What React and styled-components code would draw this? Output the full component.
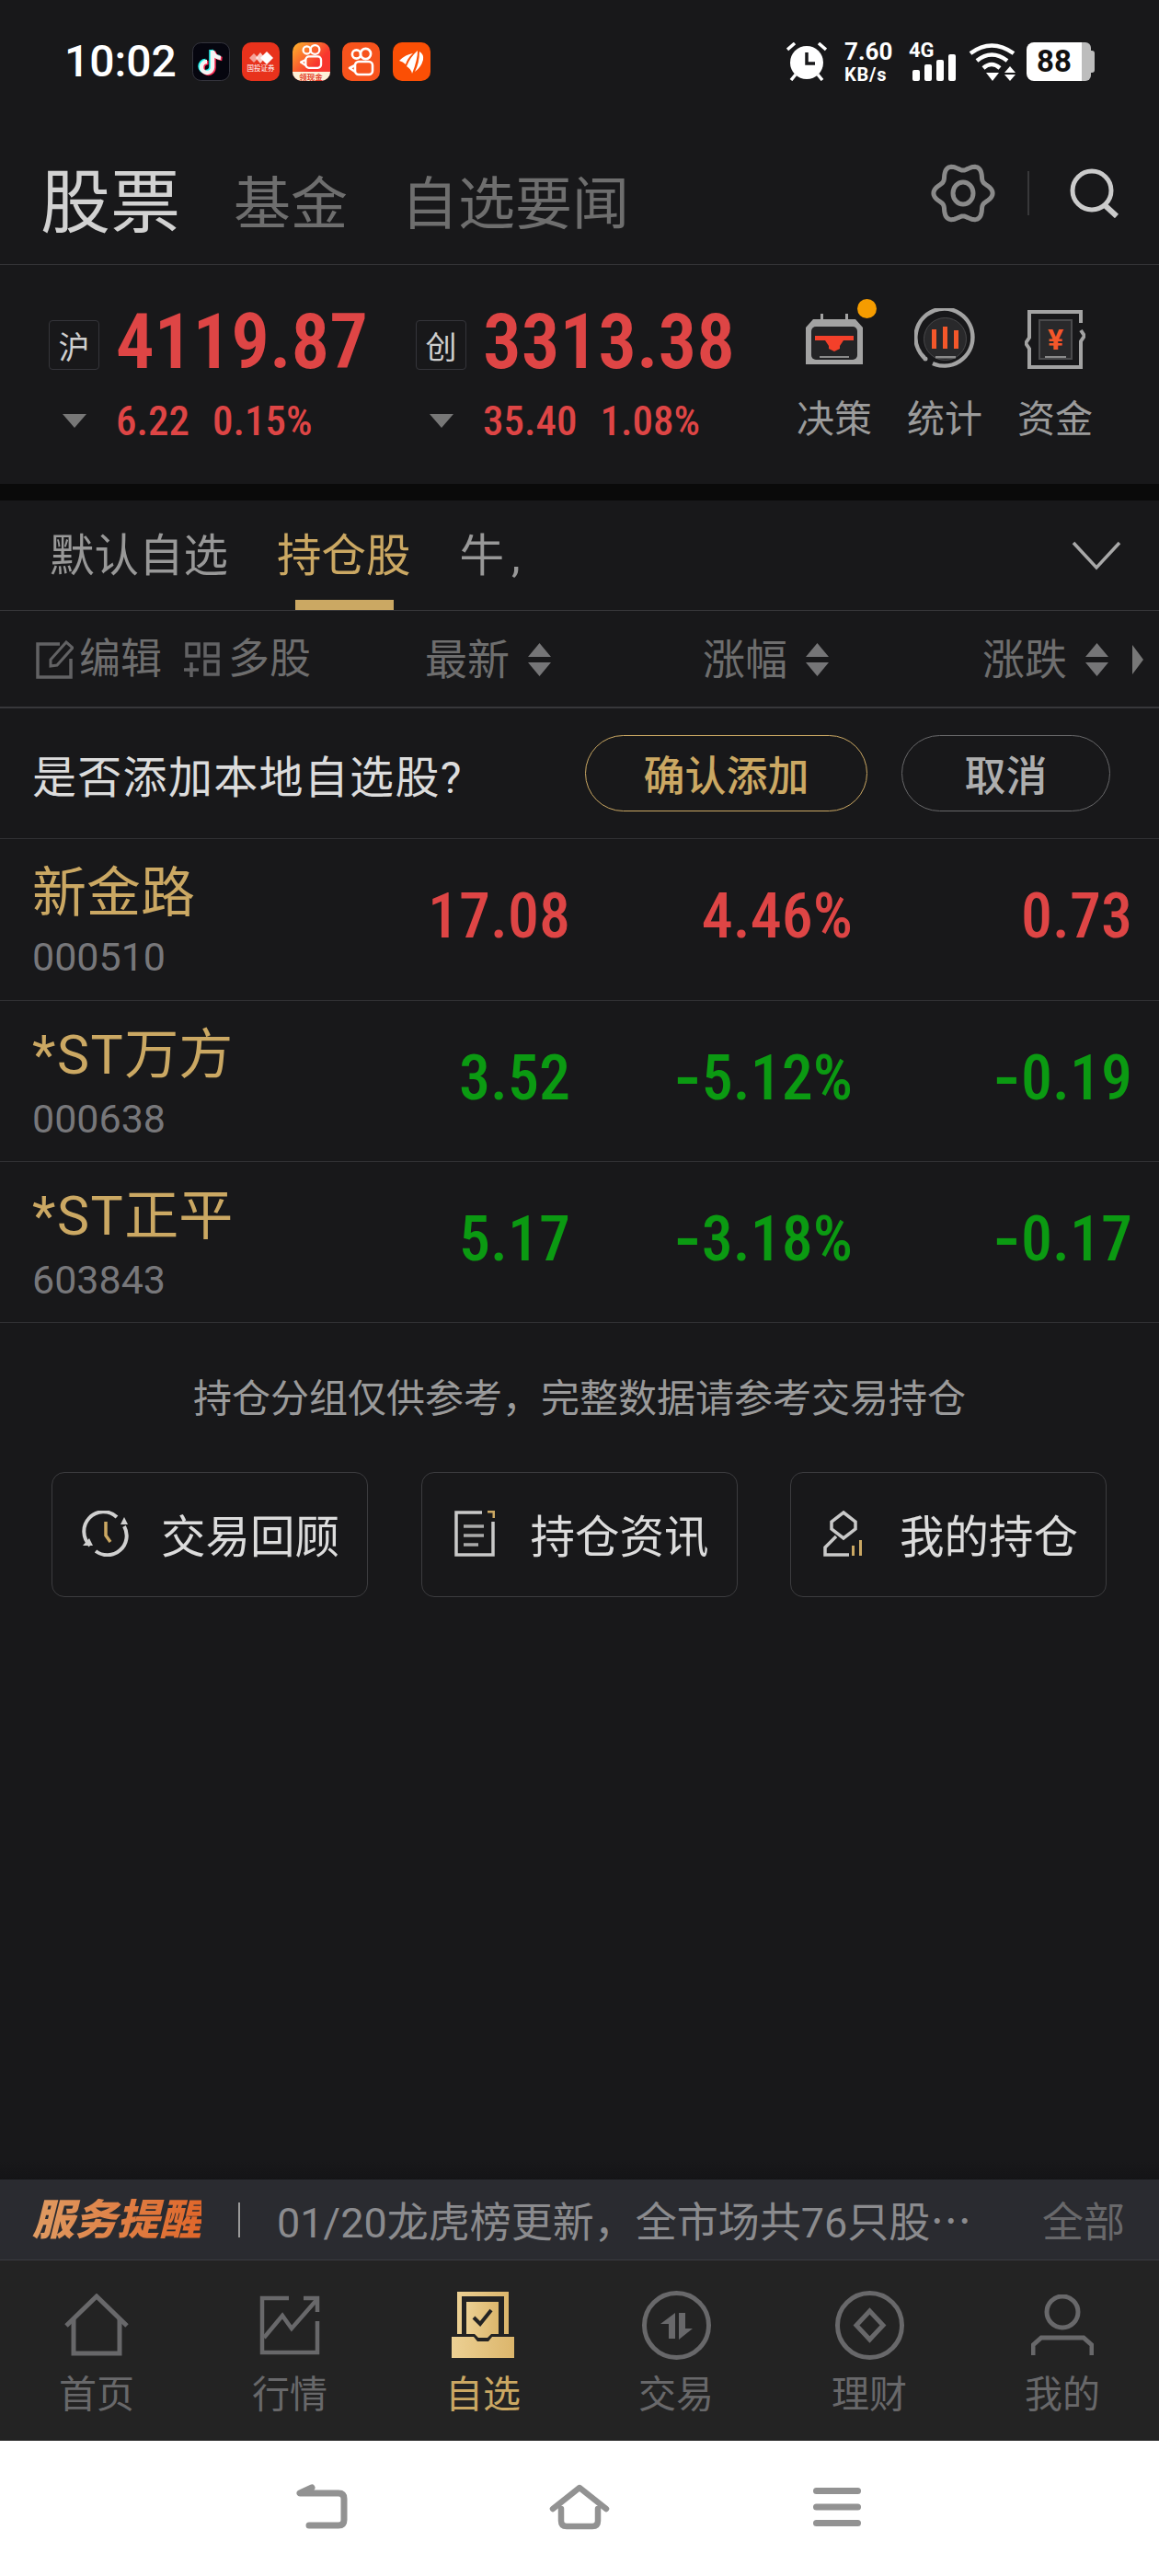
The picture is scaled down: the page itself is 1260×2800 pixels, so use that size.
import styled, { createGlobalStyle, css } from 'styled-components';

const GOLD = '#cba863';
const RED = '#de4545';
const GREEN = '#0b9a12';
const CJK = `Roboto, "Noto Sans CJK SC", sans-serif`;

const digits = css`
  font-family: Roboto, "Noto Sans CJK SC", sans-serif;
  font-stretch: 87%;
  font-weight: 500;
  line-height: 1;
`;

const GlobalStyle = createGlobalStyle`
  * { box-sizing: border-box; }
  html, body { margin: 0; padding: 0; background: #18181a; }
  body { font-family: ${CJK}; }
`;

const Screen = styled.div`
  width: 1260px;
  height: 2800px;
  display: flex;
  flex-direction: column;
  background: #18181a;
  overflow: hidden;
`;

const TopArea = styled.header`
  height: 288px;
  padding-top: 46px;
  border-bottom: 1px solid #333336;
`;

const StatusBar = styled.div`
  height: 42px;
  padding: 0 70px;
  display: flex;
  align-items: center;
  color: #fff;
`;

const Clock = styled.span`
  font-size: 48px;
  font-weight: 500;
  line-height: 42px;
  margin-right: 17px;
`;

const AppIcons = styled.div`
  display: flex;
  gap: 13.5px;
`;

const AppIcon = styled.svg`
  width: 41px;
  height: 42px;
  display: block;
`;

const StatusRight = styled.div`
  margin-left: auto;
  display: flex;
  align-items: center;
`;

const Speed = styled.div`
  width: 50px;
  margin: 4px 22px 0 19px;
  display: flex;
  flex-direction: column;
  font-weight: 700;
  color: #fff;
  span:first-child { font-size: 26px; line-height: 24px; }
  span:last-child { font-size: 20px; line-height: 26px; letter-spacing: 0.8px; }
`;

const Signal = styled.div`
  position: relative;
  width: 49px;
  height: 42px;
  margin-right: 14px;
`;

const NetworkTag = styled.span`
  position: absolute;
  left: -2px;
  top: -1px;
  font-size: 22px;
  font-weight: 700;
  line-height: 20px;
`;

const Battery = styled.div`
  margin-left: 12px;
  width: 74px;
  height: 42px;
  display: flex;
  align-items: center;
`;

const BatteryFill = styled.div`
  width: 60px;
  height: 42px;
  border-radius: 8px 0 0 8px;
  background: #fff;
  color: #111;
  font-size: 33px;
  font-weight: 700;
  line-height: 42px;
  text-align: center;
`;

const BatteryRest = styled.div`
  width: 10px;
  height: 42px;
  border-radius: 0 6px 6px 0;
  background: #bdbdbd;
`;

const BatteryCap = styled.div`
  width: 4px;
  height: 24px;
  border-radius: 0 3px 3px 0;
  background: #bdbdbd;
`;

const TitleRow = styled.div`
  margin-top: 89px;
  padding: 0 43px 0 44px;
  display: flex;
  align-items: flex-end;
  gap: 58px;
`;

const TitleTab = styled.span`
  font-size: ${({ $active }) => ($active ? 76 : 62)}px;
  line-height: 1;
  color: ${({ $active }) => ($active ? '#d2d2d2' : '#6e6e6e')};
  margin-bottom: ${({ $active }) => ($active ? 0 : 5)}px;
`;

const TitleTools = styled.div`
  margin-left: auto;
  display: flex;
  align-items: center;
  margin-bottom: 16px;
`;

const ToolDivider = styled.div`
  width: 2px;
  height: 48px;
  margin: 0 44px 0 35px;
  background: #38383a;
`;

const IndexSection = styled.section`
  height: 238px;
  padding: 42px 0 0 53px;
  display: grid;
  grid-template-columns: 399px 395px 1fr;
`;

const IndexCard = styled.div`
  display: grid;
  grid-template-columns: 55px 1fr;
  grid-auto-rows: min-content;
  column-gap: 18px;
  row-gap: 22px;
`;

const MarketBadge = styled.span`
  width: 55px;
  height: 54px;
  margin-top: 18px;
  border: 1px solid #35353a;
  border-radius: 4px;
  display: flex;
  align-items: center;
  justify-content: center;
  font-size: 34px;
  color: #cfcfcf;
`;

const IndexValue = styled.div`
  ${digits}
  font-size: 83px;
  font-weight: 600;
  color: ${RED};
`;

const DownMark = styled.span`
  justify-self: center;
  align-self: center;
  width: 0;
  height: 0;
  border-left: 13px solid transparent;
  border-right: 13px solid transparent;
  border-top: 15px solid #777;
`;

const IndexChange = styled.div`
  ${digits}
  display: flex;
  gap: 25px;
  font-size: 45px;
  font-weight: 500;
  color: ${RED};
`;

const IndexTools = styled.div`
  margin-top: 5px;
  display: grid;
  grid-template-columns: repeat(3, 120px);
`;

const IndexTool = styled.div`
  display: flex;
  flex-direction: column;
  align-items: center;
`;

const ToolIconBox = styled.div`
  position: relative;
  height: 67px;
  display: flex;
  align-items: center;
`;

const Dot = styled.span`
  position: absolute;
  right: -14px;
  top: -10px;
  width: 21px;
  height: 21px;
  border-radius: 50%;
  background: #f59c00;
`;

const ToolLabel = styled.span`
  margin-top: 34px;
  font-size: 41px;
  line-height: 40px;
  color: #9b9b9b;
`;

const Band = styled.div`
  height: 18px;
  background: #0a0a0a;
`;

const GroupTabs = styled.nav`
  height: 120px;
  padding: 0 41px 0 54px;
  border-bottom: 1px solid #38383b;
  display: flex;
  align-items: center;
  gap: 53px;
`;

const GroupTab = styled.span`
  position: relative;
  height: 119px;
  display: flex;
  align-items: center;
  padding-bottom: 8px;
  font-size: 48.5px;
  letter-spacing: ${({ $spread }) => ($spread ? 8 : 0)}px;
  color: ${({ $active }) => ($active ? GOLD : '#989898')};
  ${({ $active }) =>
    $active &&
    css`
      &::after {
        content: '';
        position: absolute;
        left: 20px;
        right: 19px;
        bottom: 0;
        height: 11px;
        background: ${GOLD};
      }
    `}
`;

const Chevron = styled.svg`
  margin-left: auto;
  width: 54px;
  height: 32px;
`;

const HeadRow = styled.div`
  height: 106px;
  padding: 2px 17px 0 39px;
  border-bottom: 2px solid #37373a;
  display: grid;
  grid-template-columns: 300px 260px 302px 304px 38px;
  align-items: center;
`;

const HeadTools = styled.div`
  display: flex;
  align-items: center;
  color: #6e6e6e;
  font-size: 45px;
  line-height: 44px;
  white-space: nowrap;
`;

const HeadTool = styled.span`
  display: flex;
  align-items: center;
  gap: ${({ $gap }) => $gap}px;
  margin-right: 24px;
`;

const SortCol = styled.div`
  display: flex;
  align-items: center;
  justify-content: flex-end;
  gap: 20px;
  font-size: 46px;
  line-height: 46px;
  color: #6e6e6e;
  white-space: nowrap;
`;

const SortArrows = styled.svg`
  width: 25px;
  height: 36px;
  flex: none;
`;

const MoreArrow = styled.span`
  justify-self: end;
  width: 0;
  height: 0;
  border-top: 16px solid transparent;
  border-bottom: 16px solid transparent;
  border-left: 12px solid #777;
`;

const ConfirmRow = styled.div`
  height: 142px;
  padding: 0 53px 0 35px;
  border-bottom: 1px solid #303033;
  display: flex;
  align-items: center;
  font-size: 48px;
  letter-spacing: 1.3px;
  color: #dcdcdc;
`;

const PillButton = styled.button`
  width: ${({ $wide }) => ($wide ? 307 : 227)}px;
  height: 83px;
  margin-left: ${({ $wide }) => ($wide ? 'auto' : '37px')};
  border-radius: 42px;
  border: 1px solid ${({ $wide }) => ($wide ? GOLD : '#68686a')};
  background: transparent;
  color: ${({ $wide }) => ($wide ? GOLD : '#aeaeae')};
  font-family: ${CJK};
  font-size: 45px;
  font-weight: 500;
  padding: 0;
`;

const StockRow = styled.div`
  height: ${({ $h }) => $h}px;
  padding-left: 35px;
  border-bottom: 1px solid #303033;
  display: grid;
  grid-template-columns: 304px 281px 307px 304px;
`;

const StockName = styled.div`
  padding-top: 30px;
  font-size: 59px;
  line-height: 58px;
  color: ${GOLD};
  white-space: nowrap;
`;

const StockFlag = styled.span`
  letter-spacing: 1.5px;
`;

const StockCode = styled.div`
  margin-top: 18px;
  font-size: 43px;
  line-height: 44px;
  color: #77777a;
`;

const StockValue = styled.div`
  ${digits}
  padding-top: 50px;
  text-align: right;
  font-size: 68px;
  color: ${({ $up }) => ($up ? RED : GREEN)};
`;

const Minus = styled.span`
  display: inline-block;
  margin: 0 5px;
  transform: scale(1.4, 1.1);
`;

const HoldingNote = styled.p`
  margin: 62px 0 0;
  font-size: 42px;
  line-height: 42px;
  text-align: center;
  color: #9a9a9a;
`;

const HoldingLinks = styled.div`
  margin-top: 58px;
  padding-left: 56px;
  display: grid;
  grid-template-columns: repeat(3, 344px);
  gap: 57.5px;
`;

const HoldingLink = styled.div`
  height: 136px;
  padding: 0 0 3px 27px;
  border: 1px solid #3c3c3f;
  border-radius: 14px;
  display: flex;
  align-items: center;
  gap: 31px;
  font-size: 48.5px;
  color: #dcdcdc;
`;

const LinkIcon = styled.span`
  width: 60px;
  display: flex;
  justify-content: center;
`;

const Spacer = styled.div`
  flex: 1;
  background: linear-gradient(#18181a 97%, #141416);
`;

const NoticeBar = styled.div`
  height: 88px;
  padding: 0 37px 0 35px;
  border-bottom: 1px solid #3a3b40;
  background: #2a2b30;
  display: flex;
  align-items: center;
`;

const NoticeBrand = styled.span`
  font-size: 46px;
  font-weight: 900;
  font-style: italic;
  line-height: 46px;
  background: linear-gradient(90deg, #df9c63, #e0662a);
  -webkit-background-clip: text;
  background-clip: text;
  color: transparent;
`;

const NoticeDivider = styled.span`
  width: 2px;
  height: 38px;
  margin: 0 40px 0 40px;
  background: #9a9a9a;
`;

const NoticeText = styled.span`
  font-size: 45px;
  color: #8b8b8e;
  white-space: nowrap;
`;

const CjkDots = styled.span`
  font-family: "Noto Sans CJK SC", sans-serif;
`;

const NoticeAll = styled.span`
  margin-left: auto;
  font-size: 45px;
  color: #68686a;
`;

const TabBar = styled.nav`
  height: 196px;
  padding-top: 30px;
  background: #232323;
  display: grid;
  grid-template-columns: repeat(6, 210px);
`;

const TabItem = styled.div`
  display: flex;
  flex-direction: column;
  align-items: center;
  gap: 16px;
  font-size: 41px;
  line-height: 40px;
  color: ${({ $active }) => ($active ? GOLD : '#68686a')};
`;

const TabIcon = styled.div`
  height: 80px;
  display: flex;
  align-items: center;
`;

const SystemBar = styled.div`
  height: 147px;
  padding-bottom: 4px;
  background: #fff;
  display: grid;
  grid-template-columns: repeat(3, 280px);
  justify-content: center;
  justify-items: center;
  align-items: center;
`;

const gearPath = () => {
  const pts = [];
  for (let i = 0; i < 120; i++) {
    const t = (i / 120) * Math.PI * 2;
    const r = 28.5 + 3.6 * Math.cos(6 * t);
    pts.push(`${(35 + r * Math.cos(t)).toFixed(1)},${(33 + r * Math.sin(t)).toFixed(1)}`);
  }
  return `M${pts.join('L')}Z`;
};

const KuaishouMark = () => (
  <g fill="none" stroke="#fff" strokeWidth="2.6">
    <circle cx="15.5" cy="13" r="4.6" />
    <circle cx="25.5" cy="12.5" r="5.6" />
    <rect x="14" y="21" width="19" height="14" rx="4" />
    <path d="M14 25 L8 28 L14 32" strokeLinejoin="round" />
  </g>
);

const AppRow = () => (
  <AppIcons>
    <AppIcon viewBox="0 0 41 42">
      <rect x=".5" y=".5" width="40" height="41" rx="9" fill="#06060f" stroke="#33333c" />
      <g fill="none" strokeWidth="4.5">
        <path d="M22 9 V27 a6 6 0 1 1 -6 -6 M22 9 q1 7 9 8" stroke="#25f4ee" transform="translate(-1.5 -1)" />
        <path d="M22 9 V27 a6 6 0 1 1 -6 -6 M22 9 q1 7 9 8" stroke="#fe2c55" transform="translate(1.5 1)" />
        <path d="M22 9 V27 a6 6 0 1 1 -6 -6 M22 9 q1 7 9 8" stroke="#f4f4f4" />
      </g>
    </AppIcon>
    <AppIcon viewBox="0 0 41 42">
      <rect width="41" height="42" rx="10" fill="#e8321c" />
      <g fill="#fff">
        <path d="M27 10 L34 17 L27 24 L20 17Z" />
        <path d="M20 11 L25 17 L20 23 L15 17Z" opacity=".75" />
        <path d="M13 12 L18 17 L13 22 L8 17Z" opacity=".55" />
      </g>
      <text x="20.5" y="31" fontSize="7.5" fill="#fff" textAnchor="middle" fontFamily="Noto Sans CJK SC">国投证券</text>
    </AppIcon>
    <AppIcon viewBox="0 0 41 42">
      <defs>
        <linearGradient id="ksGrad" x1="0" y1="0" x2="1" y2="1">
          <stop offset="0" stopColor="#fdb52c" />
          <stop offset=".6" stopColor="#f8362f" />
        </linearGradient>
      </defs>
      <rect width="41" height="42" rx="10" fill="url(#ksGrad)" />
      <g transform="translate(2 -3) scale(.88)"><KuaishouMark /></g>
      <path d="M0 32 H41 V32 a10 10 0 0 1 -10 10 H10 a10 10 0 0 1 -10 -10Z" fill="#fdf1d8" />
      <text x="20" y="40.5" fontSize="8.5" fontWeight="700" fill="#e5432e" textAnchor="middle" fontFamily="Noto Sans CJK SC">领现金</text>
    </AppIcon>
    <AppIcon viewBox="0 0 41 42">
      <rect width="41" height="42" rx="10" fill="#f7531c" />
      <KuaishouMark />
    </AppIcon>
    <AppIcon viewBox="0 0 41 42">
      <rect width="41" height="42" rx="10" fill="#fb4f05" />
      <g fill="#fff">
        <path d="M7 20 Q14 13 22 12 Q16 17 14 24 Q11 21 7 20Z" />
        <path d="M15 26 Q19 16 27 9 Q27 19 21 34 Q20 29 15 26Z" />
        <path d="M24 32 Q29 22 29 10 Q34 13 33 19 Q31 27 24 32Z" />
      </g>
    </AppIcon>
  </AppIcons>
);

const AlarmIcon = () => (
  <svg width="44" height="42" viewBox="0 0 44 42">
    <circle cx="22" cy="22" r="18" fill="#fff" />
    <path d="M1 8 L9 1 M43 8 L35 1" stroke="#fff" strokeWidth="3.5" />
    <path d="M5 41 L10 35 M39 41 L34 35" stroke="#fff" strokeWidth="3.5" />
    <path d="M22 11 V23 H31" fill="none" stroke="#18181a" strokeWidth="3.5" />
  </svg>
);

const SignalBars = () => (
  <svg width="49" height="42" viewBox="0 0 49 42">
    <g fill="#fff">
      <rect x="2" y="30" width="8" height="12" rx="2" />
      <rect x="15" y="24" width="8" height="18" rx="2" />
      <rect x="28" y="19" width="8" height="23" rx="2" />
      <rect x="41" y="13" width="8" height="29" rx="2" />
    </g>
  </svg>
);

const WifiIcon = () => (
  <svg width="51" height="42" viewBox="0 0 51 42">
    <g fill="none" stroke="#fff" strokeWidth="4.5">
      <path d="M2 12 Q25 -5 49 12" />
      <path d="M9 20 Q25 7 42 20" />
      <path d="M16 28 Q25 20 34 28" />
    </g>
    <path d="M19 33 H33 L26 42Z M39 35 H51 L45 42Z M39 33 H51 L45 26Z" fill="#fff" />
  </svg>
);

const GearIcon = () => (
  <svg width="70" height="66" viewBox="0 0 70 66">
    <path d={gearPath()} fill="none" stroke="#8a8a8a" strokeWidth="5" strokeLinejoin="round" />
    <ellipse cx="35" cy="33" rx="11" ry="12" fill="none" stroke="#8a8a8a" strokeWidth="5" />
  </svg>
);

const SearchIcon = () => (
  <svg width="54" height="54" viewBox="0 0 54 54">
    <circle cx="24" cy="24" r="21" fill="none" stroke="#cbcbcb" strokeWidth="5" />
    <path d="M38 40 L51 52" stroke="#cbcbcb" strokeWidth="6" />
  </svg>
);

const DecisionIcon = () => (
  <svg width="64" height="58" viewBox="0 0 64 58">
    <path d="M9 7 H17 V1 h3 V7 H44 V1 h3 V7 H55 L63 16 V56 H1 V16Z" fill="#a3a3a3" />
    <rect x="7" y="15" width="50" height="36" rx="5" fill="#232325" />
    <rect x="11" y="25" width="42" height="5" fill="#f4402a" />
    <path d="M22 30 H42 L38 36 V39 L32 42 L26 39 V36Z" fill="#f4402a" />
    <rect x="16" y="47" width="32" height="2" fill="#8a8a8a" />
  </svg>
);

const StatsIcon = () => (
  <svg width="67" height="67" viewBox="0 0 67 67">
    <path d="M11 54 A31 31 0 1 1 20 60" fill="none" stroke="#a3a3a3" strokeWidth="4.5" />
    <circle cx="12" cy="55" r="2.5" fill="#a3a3a3" />
    <circle cx="33.5" cy="33.5" r="23" fill="#29292b" stroke="#48484a" />
    <path d="M19 23 h5 v21 h-5z M31 20 h5 v24 h-5z M43 24 h5 v20 h-5z" fill="#f4572a" />
    <rect x="23" y="52" width="22" height="2.5" fill="#8a8a8a" />
  </svg>
);

const FundsIcon = () => (
  <svg width="66" height="64" viewBox="0 0 66 64">
    <path d="M61 14 V2 H5 V30 L1 36 L5 42 V62 H61 V34 L65 28 L61 22" fill="none" stroke="#a3a3a3" strokeWidth="4" />
    <rect x="16" y="11" width="35" height="42" fill="#29292b" stroke="#4a4a4c" strokeWidth="2" />
    <text x="33.5" y="43" fontSize="32" fontWeight="700" fill="#f4572a" textAnchor="middle" fontFamily="Roboto">¥</text>
    <rect x="22" y="50" width="23" height="2" fill="#8a8a8a" />
  </svg>
);

const EditIcon = () => (
  <svg width="41" height="42" viewBox="0 0 41 42">
    <path d="M26 4 H2 V40 H38 V20" fill="none" stroke="#626264" strokeWidth="3.5" />
    <path d="M16 28 L16 21 L33 2 L40 8 L23 27Z" fill="none" stroke="#626264" strokeWidth="3" />
  </svg>
);

const MultiIcon = () => (
  <svg width="39" height="38" viewBox="0 0 39 38">
    <g fill="none" stroke="#626264" strokeWidth="3.5">
      <rect x="3" y="2" width="13" height="13" />
      <rect x="23" y="2" width="14" height="13" />
      <rect x="23" y="21" width="14" height="14" />
      <path d="M0 30 H16 M8 22 V38" />
    </g>
  </svg>
);

const SortMark = () => (
  <SortArrows viewBox="0 0 25 36">
    <path d="M12.5 0 L25 15 H0Z M0 21 H25 L12.5 36Z" fill="#757577" />
  </SortArrows>
);

const ReviewIcon = () => (
  <svg width="51" height="50" viewBox="0 0 51 50">
    <g fill="none" stroke="#d0d0d0" strokeWidth="4">
      <path d="M38 7 A21 21 0 0 0 9 38" />
      <path d="M46 17 A21 21 0 0 1 15 44" />
    </g>
    <path d="M1 38 H12 L8 30Z M50 15 H42 L46 7Z" fill="#d0d0d0" />
    <path d="M26 12 V27 L31 34" fill="none" stroke={GOLD} strokeWidth="3.5" />
  </svg>
);

const NewsIcon = () => (
  <svg width="44" height="50" viewBox="0 0 44 50">
    <path d="M30 2 H2 V48 H42 V12" fill="none" stroke="#c9c9c9" strokeWidth="3.5" />
    <path d="M10 17 H32 M10 27 H32 M10 37 H26" stroke="#a9a9a9" strokeWidth="3.5" />
    <path d="M36 1 H43 V8" fill="none" stroke={GOLD} strokeWidth="3" />
  </svg>
);

const PositionIcon = () => (
  <svg width="44" height="50" viewBox="0 0 44 50">
    <path d="M22 2 L35 12 V20 L22 30 L9 20 V12Z" fill="none" stroke="#c9c9c9" strokeWidth="3.5" />
    <path d="M14 28 L2 40 V48 H28" fill="none" stroke="#c9c9c9" strokeWidth="3.5" />
    <path d="M31 38 h3 v11 h-3z M39 32 h3 v17 h-3z" fill={GOLD} />
  </svg>
);

const HomeTab = () => (
  <svg width="70" height="68" viewBox="0 0 70 68" fill="none" stroke="#68686a" strokeWidth="5">
    <path d="M2 35 L35 3 L68 35" />
    <path d="M10 28 V65 H60 V28" />
  </svg>
);

const MarketTab = () => (
  <svg width="66" height="65" viewBox="0 0 66 65" fill="none" stroke="#68686a" strokeWidth="4.5">
    <path d="M32 3 H3 V62 H63 V28" />
    <path d="M48 3 H63 V18" />
    <path d="M5 46 L25 22 L35 36 L63 4" />
  </svg>
);

const WatchTab = () => (
  <svg width="68" height="72" viewBox="0 0 68 72">
    <defs>
      <linearGradient id="goldGrad" x1="0" y1="0" x2="1" y2="0">
        <stop offset="0" stopColor="#ecd093" />
        <stop offset="1" stopColor="#dcb66c" />
      </linearGradient>
    </defs>
    <rect x="6" y="0" width="56" height="46" fill="url(#goldGrad)" />
    <rect x="11" y="5" width="46" height="41" fill="#232323" />
    <path d="M16 11 H51 V46 H43 L39 50 H29 L25 46 H16Z" fill="url(#goldGrad)" />
    <path d="M0 49 H24 L28 54 H40 L44 49 H68 V72 H0Z" fill="url(#goldGrad)" />
    <path d="M24 28 L31 35 L43 20" fill="none" stroke="#232323" strokeWidth="4" />
  </svg>
);

const TradeTab = () => (
  <svg width="75" height="75" viewBox="0 0 75 75">
    <circle cx="37.5" cy="37.5" r="35" fill="none" stroke="#68686a" strokeWidth="5" />
    <path d="M36 24 L20 36 H29 V52 H36Z M40 24 H47 V41 H55 L40 53Z" fill="#68686a" />
  </svg>
);

const WealthTab = () => (
  <svg width="75" height="75" viewBox="0 0 75 75" fill="none" stroke="#68686a" strokeWidth="5">
    <circle cx="37.5" cy="37.5" r="35" />
    <path d="M37.5 22 L52 37.5 L37.5 53 L23 37.5Z" />
  </svg>
);

const MineTab = () => (
  <svg width="68" height="66" viewBox="0 0 68 66" fill="none" stroke="#68686a" strokeWidth="5">
    <ellipse cx="34" cy="19" rx="17" ry="17" />
    <path d="M2 66 V55 L11 47 H57 L66 55 V66" />
  </svg>
);

const stocks = [
  { name: '新金路', code: '000510', price: '17.08', pct: '4.46%', diff: '0.73', up: true, h: 176 },
  { flag: '*ST', name: '万方', code: '000638', price: '3.52', pct: '5.12%', diff: '0.19', h: 175 },
  { flag: '*ST', name: '正平', code: '603843', price: '5.17', pct: '3.18%', diff: '0.17', h: 175 },
];

const tabs = [
  { label: '首页', Icon: HomeTab },
  { label: '行情', Icon: MarketTab },
  { label: '自选', Icon: WatchTab, active: true },
  { label: '交易', Icon: TradeTab },
  { label: '理财', Icon: WealthTab },
  { label: '我的', Icon: MineTab },
];

export default function App() {
  return (
    <Screen>
      <GlobalStyle />
      <TopArea>
        <StatusBar>
          <Clock>10:02</Clock>
          <AppRow />
          <StatusRight>
            <AlarmIcon />
            <Speed>
              <span>7.60</span>
              <span>KB/s</span>
            </Speed>
            <Signal>
              <SignalBars />
              <NetworkTag>4G</NetworkTag>
            </Signal>
            <WifiIcon />
            <Battery>
              <BatteryFill>88</BatteryFill>
              <BatteryRest />
              <BatteryCap />
            </Battery>
          </StatusRight>
        </StatusBar>
        <TitleRow>
          <TitleTab $active>股票</TitleTab>
          <TitleTab>基金</TitleTab>
          <TitleTab>自选要闻</TitleTab>
          <TitleTools>
            <GearIcon />
            <ToolDivider />
            <SearchIcon />
          </TitleTools>
        </TitleRow>
      </TopArea>

      <IndexSection>
        <IndexCard>
          <MarketBadge>沪</MarketBadge>
          <IndexValue>4119.87</IndexValue>
          <DownMark />
          <IndexChange>
            <span>6.22</span>
            <span>0.15%</span>
          </IndexChange>
        </IndexCard>
        <IndexCard>
          <MarketBadge>创</MarketBadge>
          <IndexValue>3313.38</IndexValue>
          <DownMark />
          <IndexChange>
            <span>35.40</span>
            <span>1.08%</span>
          </IndexChange>
        </IndexCard>
        <IndexTools>
          <IndexTool>
            <ToolIconBox>
              <DecisionIcon />
              <Dot />
            </ToolIconBox>
            <ToolLabel>决策</ToolLabel>
          </IndexTool>
          <IndexTool>
            <ToolIconBox>
              <StatsIcon />
            </ToolIconBox>
            <ToolLabel>统计</ToolLabel>
          </IndexTool>
          <IndexTool>
            <ToolIconBox>
              <FundsIcon />
            </ToolIconBox>
            <ToolLabel>资金</ToolLabel>
          </IndexTool>
        </IndexTools>
      </IndexSection>

      <Band />

      <GroupTabs>
        <GroupTab>默认自选</GroupTab>
        <GroupTab $active>持仓股</GroupTab>
        <GroupTab $spread>牛,</GroupTab>
        <Chevron viewBox="0 0 54 32">
          <path d="M2 2 L27 29 L52 2" fill="none" stroke="#a8a8a8" strokeWidth="3.5" />
        </Chevron>
      </GroupTabs>

      <HeadRow>
        <HeadTools>
          <HeadTool $gap={6}>
            <EditIcon />
            编辑
          </HeadTool>
          <HeadTool $gap={9}>
            <MultiIcon />
            多股
          </HeadTool>
        </HeadTools>
        <SortCol>
          最新
          <SortMark />
        </SortCol>
        <SortCol>
          涨幅
          <SortMark />
        </SortCol>
        <SortCol>
          涨跌
          <SortMark />
        </SortCol>
        <MoreArrow />
      </HeadRow>

      <ConfirmRow>
        是否添加本地自选股?
        <PillButton $wide>确认添加</PillButton>
        <PillButton>取消</PillButton>
      </ConfirmRow>

      {stocks.map((s) => (
        <StockRow key={s.code} $h={s.h}>
          <StockName>
            {s.flag && <StockFlag>{s.flag}</StockFlag>}
            {s.name}
            <StockCode>{s.code}</StockCode>
          </StockName>
          <StockValue $up={s.up}>{s.price}</StockValue>
          <StockValue $up={s.up}>
            {!s.up && <Minus>-</Minus>}
            {s.pct}
          </StockValue>
          <StockValue $up={s.up}>
            {!s.up && <Minus>-</Minus>}
            {s.diff}
          </StockValue>
        </StockRow>
      ))}

      <HoldingNote>持仓分组仅供参考，完整数据请参考交易持仓</HoldingNote>

      <HoldingLinks>
        <HoldingLink>
          <LinkIcon><ReviewIcon /></LinkIcon>
          交易回顾
        </HoldingLink>
        <HoldingLink>
          <LinkIcon><NewsIcon /></LinkIcon>
          持仓资讯
        </HoldingLink>
        <HoldingLink>
          <LinkIcon><PositionIcon /></LinkIcon>
          我的持仓
        </HoldingLink>
      </HoldingLinks>

      <Spacer />

      <NoticeBar>
        <NoticeBrand>服务提醒</NoticeBrand>
        <NoticeDivider />
        <NoticeText>
          01/20龙虎榜更新，全市场共76只股<CjkDots>…</CjkDots>
        </NoticeText>
        <NoticeAll>全部</NoticeAll>
      </NoticeBar>

      <TabBar>
        {tabs.map(({ label, Icon, active }) => (
          <TabItem key={label} $active={active}>
            <TabIcon>
              <Icon />
            </TabIcon>
            {label}
          </TabItem>
        ))}
      </TabBar>

      <SystemBar>
        <svg width="56" height="49" viewBox="0 0 56 49" fill="none" stroke="#929292" strokeWidth="7" strokeLinecap="round" strokeLinejoin="round">
          <path d="M17 4 L4 10 H46 Q52 10 52 16 V39 Q52 45 46 45 H14" />
        </svg>
        <svg width="66" height="50" viewBox="0 0 66 50" fill="none" stroke="#929292" strokeWidth="6.5" strokeLinecap="round" strokeLinejoin="round">
          <path d="M4 27 L33 4 L62 27" />
          <path d="M13 27 V40 Q13 46 19 46 H47 Q53 46 53 40 V27" />
        </svg>
        <svg width="52" height="42" viewBox="0 0 52 42" fill="#929292">
          <rect width="52" height="7" rx="3.5" />
          <rect y="17.5" width="52" height="7" rx="3.5" />
          <rect y="35" width="52" height="7" rx="3.5" />
        </svg>
      </SystemBar>
    </Screen>
  );
}
